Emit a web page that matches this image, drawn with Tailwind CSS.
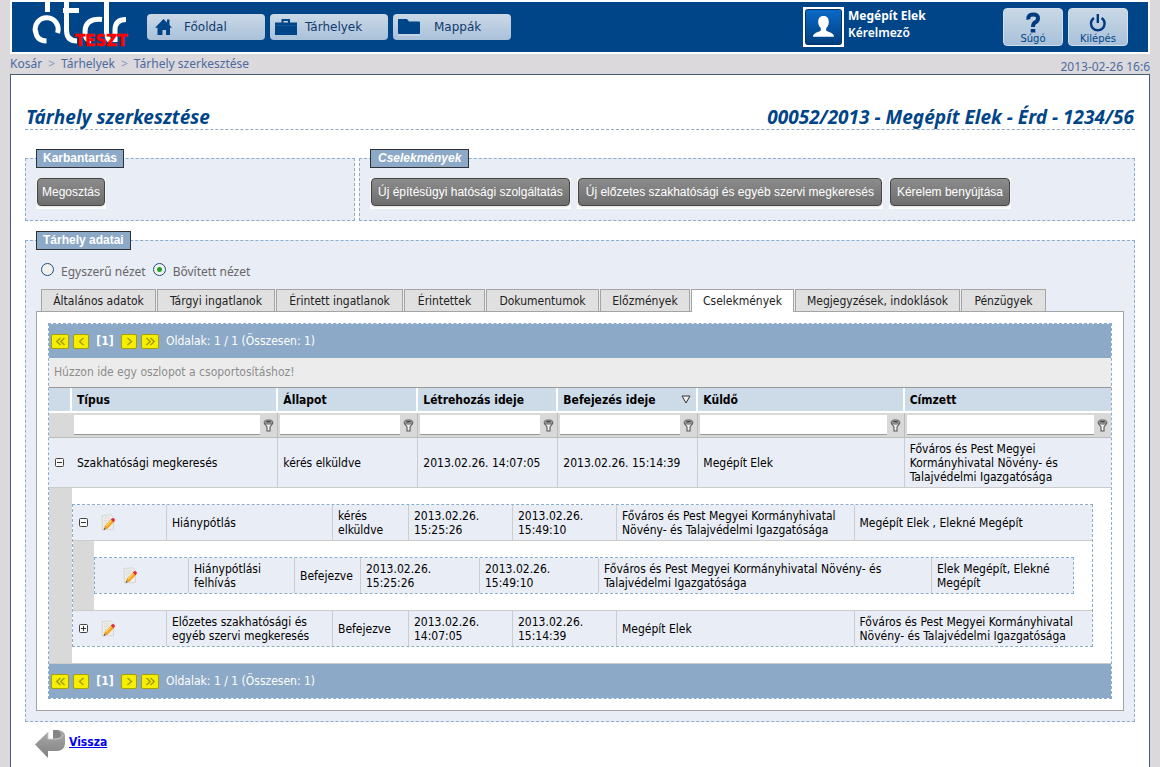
<!DOCTYPE html>
<html lang="hu">
<head>
<meta charset="utf-8">
<title>Tárhely szerkesztése</title>
<script src="https://cdn.jsdelivr.net/npm/@tailwindcss/browser@4"></script>
</head>
<body class="flex min-h-screen flex-col bg-[#dbd9dc] px-2.5 font-['DejaVu_Sans_Condensed','DejaVu_Sans',sans-serif] text-xs leading-[14px] text-black">

<svg class="hidden" aria-hidden="true">
  <symbol id="funnel" viewBox="0 0 10 12"><path d="M1 3.200C1 5 3.200 6 3.600 7.200V11h2.800V7.200C6.800 6 9 5 9 3.200" fill="#f4f4f4" stroke="#555" stroke-width="1"/><ellipse cx="5" cy="2.800" rx="4" ry="2" fill="#999" stroke="#666" stroke-width=".8"/><path d="M3 2.500h4" stroke="#333"/></symbol>
  <symbol id="edit" viewBox="0 0 14 17"><path d="M1 1.500 10 .8l2.500 2.700V15.500L1.500 16z" fill="#ececea" stroke="#d0d0ce" stroke-width=".8"/><path d="M3 4h6M3 6.500h5M3 9h3" stroke="#dcdcdc"/><path d="M3 15.500 4 11.500l6-6.300 3 2.800-6.500 6.600z" fill="#f5a41c"/><path d="M5 12 10.600 6.200" stroke="#ffd870" stroke-width="1.200"/><path d="m9.700 5.500 1.200-1.100q1.200-.8 2.300.2t.4 2.300L12.500 8.300z" fill="#dd2c38"/><path d="M3 15.500 4 11.700 6.500 14.500z" fill="#dc9a3c"/><path d="m2.600 16 .6-2 1.300 1.300z" fill="#444"/></symbol>
  <symbol id="minus" viewBox="0 0 10 10"><rect x=".5" y=".5" width="8" height="8" rx="1" fill="#f7f7f7" stroke="#444"/><path d="M2 4.500h5" stroke="#333"/></symbol>
  <symbol id="plus" viewBox="0 0 10 10"><rect x=".5" y=".5" width="8" height="8" rx="1" fill="#f7f7f7" stroke="#444"/><path d="M2 4.500h5M4.500 2v5" stroke="#333"/></symbol>
  <symbol id="one" viewBox="0 0 9 9"><path d="M6.500 1 2.500 4.500l4 3.500" fill="none" stroke="#a39b00" stroke-width="1.400"/></symbol>
  <symbol id="two" viewBox="0 0 9 9"><path d="M4.500 1 .8 4.500l3.700 3.500M8.500 1 4.800 4.500l3.700 3.500" fill="none" stroke="#a39b00" stroke-width="1.400"/></symbol>
</svg>

<header class="flex h-[54px] shrink-0 border-2 border-white bg-[#004587] pr-5 pl-5">
  <div class="w-[115px] shrink-0">
    <svg class="block" width="100" height="50" viewBox="32 2 100 50" role="img" aria-label="étdr TESZT">
      <g fill="none" stroke="#fff" stroke-width="5">
        <path d="M47.500 2V12"/>
        <path d="M35.500 32A11.500 11.500 0 1 1 57.500 33M35.500 30Q36 41 46.500 41"/>
        <path d="M66.500 2V30Q66.500 41 77 41M63 10.500H79"/>
        <path d="M102 19.500Q85 18 85 32 85 40 91 41M106.500 2V32Q107 40 111 41"/>
        <path d="M126 19.500Q115 19.500 115 30V42"/>
      </g>
      <text x="75" y="46" font-family="DejaVu Sans" font-weight="bold" font-size="15" fill="#f00" stroke="#f00" stroke-width=".6">TESZT</text>
    </svg>
  </div>
  <nav class="flex gap-[5px] pt-3 font-['DejaVu_Sans',sans-serif] text-xs text-[#123a6d]">
    <button class="flex h-[26px] w-[118px] items-center rounded bg-linear-to-b from-[#cbd9e6] to-[#a9c1da] pl-2"><svg class="mr-3" width="17" height="18" viewBox="0 0 17 18"><path d="M8.500 1 12 4.500V1.500h2.500V7L17 9.700h-2V17h-4v-5H7.500v5H2.500V9.700H0z" fill="#004587"/></svg>Főoldal</button>
    <button class="flex h-[26px] w-[118px] items-center rounded bg-linear-to-b from-[#cbd9e6] to-[#a9c1da] pl-[5px]"><svg class="mr-2" width="22" height="18" viewBox="0 0 22 18"><path d="M0 4.500h6.500V1H15v3.500h7V17H0zM8.500 3v1.500H13V3z" fill="#004587" fill-rule="evenodd"/><path d="M0 7.500h22" stroke="#1b5c9c" stroke-width=".8"/></svg>Tárhelyek</button>
    <button class="flex h-[26px] w-[118px] items-center rounded bg-linear-to-b from-[#cbd9e6] to-[#a9c1da] pl-[5px]"><svg class="mr-3.5" width="22" height="18" viewBox="0 0 22 18"><path d="M0 1.500Q0 1 .8 1H9l2 2.500h10q1 0 1 1V15q0 1-1 1H1q-1 0-1-1z" fill="#004587"/><path d="M.5 17h21" stroke="#dbe7f2"/></svg>Mappák</button>
  </nav>
  <div class="ml-auto flex gap-1 pt-[5px] font-['Noto_Sans',sans-serif] text-white">
    <svg width="41" height="40" viewBox="0 0 41 40" role="img" aria-label="Profil"><defs><linearGradient id="av" x2="0" y2="1"><stop stop-color="#0a6ac8"/><stop offset="1" stop-color="#003e7d"/></linearGradient></defs><path d="M0 0h41v40H0z" fill="#fff"/><rect x="2.500" y="2.500" width="36" height="35" rx="2" fill="url(#av)" stroke="#003468"/><path d="M20.500 9c4 0 5.300 2.600 5.300 6 0 2.800-1.200 4.800-2.600 6v2.500c1 1.500 7.800 2 7.800 6.300H10c0-4.300 6.800-4.800 7.800-6.300V21c-1.400-1.200-2.600-3.200-2.600-6 0-3.400 1.300-6 5.300-6z" fill="#fff"/></svg>
    <div class="w-[151px] leading-[17px]"><div class="font-bold">Megépít Elek</div><div class="font-semibold">Kérelmező</div></div>
    <div class="flex gap-[5px] pt-px font-['DejaVu_Sans',sans-serif] text-[10px] text-[#004587]">
      <button class="flex h-[38px] w-[60px] flex-col items-center rounded-sm border border-[#d3dfeb] bg-linear-to-b from-[#c9d8e5] to-[#a9c1da] pt-[3px] leading-3"><svg width="16" height="21" viewBox="0 0 16 21"><path d="M3.500 7.500Q2.500 2.500 8 2.500t5 4q0 2.500-3 4-2 1.200-2 4.500" fill="none" stroke="#003a80" stroke-width="4"/><path d="M5.700 17h4.600v3.500H5.700z" fill="#003a80"/></svg>Súgó</button>
      <button class="flex h-[38px] w-[60px] flex-col items-center rounded-sm border border-[#d3dfeb] bg-linear-to-b from-[#c9d8e5] to-[#a9c1da] pt-[3px] leading-3"><svg width="18" height="21" viewBox="0 0 18 21"><path d="M5 6Q2 8 2 11.500a6.800 6.800 0 0 0 13.600 0Q15.600 8 12.600 6M8.800 2v9" fill="none" stroke="#003a80" stroke-width="2.400"/></svg>Kilépés</button>
    </div>
  </div>
</header>

<div class="flex h-5 shrink-0 justify-between font-['Noto_Sans',sans-serif] text-xs leading-5 text-[#4d6a9f]">
  <nav class="flex gap-1.5"><a href="#">Kosár</a><span class="text-[#8497bd]">&gt;</span><a href="#">Tárhelyek</a><span class="text-[#8497bd]">&gt;</span><a href="#">Tárhely szerkesztése</a></nav>
  <time class="pt-[3px]">2013-02-26 16:6</time>
</div>

<main class="flex-1 border-x border-t border-[#435d78] bg-white px-3.5 pt-[31px]">
  <div class="flex justify-between border-b border-dashed border-[#8caac8] px-px font-['Noto_Sans',sans-serif] text-[19px] leading-[23px] font-bold text-[#004587] italic">
    <h1>Tárhely szerkesztése</h1>
    <h2>00052/2013 - Megépít Elek - Érd - 1234/56</h2>
  </div>

  <div class="mt-[19px] flex gap-1 font-['Liberation_Sans',sans-serif]">
    <fieldset class="h-[72px] w-[330px] border border-dashed border-[#8caccc] bg-[#e9edf5] px-2.5">
      <legend class="h-[19px] border border-[#2d3035] bg-[#8ca9c7] px-1.5 leading-[17px] font-bold text-white">Karbantartás</legend>
      <div class="flex pt-2.5">
        <span class="bg-white px-px pb-[3px]"><button class="block h-7 rounded-sm border border-[#444] bg-linear-to-b from-[#8c8c8c] to-[#6e6e6e] px-1 whitespace-nowrap text-white shadow-sm">Megosztás</button></span>
      </div>
    </fieldset>
    <fieldset class="h-[72px] min-w-0 flex-1 border border-dashed border-[#8caccc] bg-[#e9edf5] px-2.5">
      <legend class="h-[19px] border border-[#2d3035] bg-[#8ca9c7] px-[7px] leading-[17px] font-bold text-white italic">Cselekmények</legend>
      <div class="flex gap-1.5 pt-2.5">
        <span class="bg-white px-px pb-[3px]"><button class="block h-7 rounded-sm border border-[#444] bg-linear-to-b from-[#8c8c8c] to-[#6e6e6e] px-1.5 whitespace-nowrap text-white shadow-sm">Új építésügyi hatósági szolgáltatás</button></span>
        <span class="bg-white px-px pb-[3px]"><button class="block h-7 rounded-sm border border-[#444] bg-linear-to-b from-[#8c8c8c] to-[#6e6e6e] px-[7px] whitespace-nowrap text-white shadow-sm">Új előzetes szakhatósági és egyéb szervi megkeresés</button></span>
        <span class="bg-white px-px pb-[3px]"><button class="block h-7 rounded-sm border border-[#444] bg-linear-to-b from-[#8c8c8c] to-[#6e6e6e] px-1.5 whitespace-nowrap text-white shadow-sm">Kérelem benyújtása</button></span>
      </div>
    </fieldset>
  </div>

  <fieldset class="mt-2.5 min-w-0 border border-dashed border-[#8caccc] bg-[#e9edf5] px-2.5 pb-2.5">
    <legend class="h-[19px] border border-[#2d3035] bg-[#8ca9c7] px-1.5 font-['Liberation_Sans',sans-serif] leading-[17px] font-bold text-white">Tárhely adatai</legend>
    <div class="flex h-[39px] items-start gap-[7px] px-[5px] pt-[13px] font-['Noto_Sans',sans-serif] leading-[17px] text-[#666]">
      <label class="flex gap-[7px]"><input type="radio" name="view" class="size-[13px] appearance-none rounded-full border border-[#1c5180] bg-[#f1f1ee]">Egyszerű nézet</label>
      <label class="flex gap-[7px]"><input type="radio" name="view" checked class="size-[13px] appearance-none rounded-full border border-[#1c5180] bg-[#f1f1ee] bg-[radial-gradient(circle,#22a322_0_2px,#f1f1ee_3px)]">Bővített nézet</label>
    </div>
    <div class="relative z-10 -mb-px flex gap-px pl-[5px] text-[#222]" role="tablist">
      <button role="tab" class="h-[23px] w-[115px] border border-[#a4a4a4] bg-[#e0e0e0] whitespace-nowrap">Általános adatok</button>
      <button role="tab" class="h-[23px] w-[118px] border border-[#a4a4a4] bg-[#e0e0e0] whitespace-nowrap">Tárgyi ingatlanok</button>
      <button role="tab" class="h-[23px] w-[127px] border border-[#a4a4a4] bg-[#e0e0e0] whitespace-nowrap">Érintett ingatlanok</button>
      <button role="tab" class="h-[23px] w-[81px] border border-[#a4a4a4] bg-[#e0e0e0] whitespace-nowrap">Érintettek</button>
      <button role="tab" class="h-[23px] w-[113px] border border-[#a4a4a4] bg-[#e0e0e0] whitespace-nowrap">Dokumentumok</button>
      <button role="tab" class="h-[23px] w-[90px] border border-[#a4a4a4] bg-[#e0e0e0] whitespace-nowrap">Előzmények</button>
      <button role="tab" aria-selected="true" class="h-[23px] w-[103px] border border-b-0 border-[#a4a4a4] bg-white whitespace-nowrap">Cselekmények</button>
      <button role="tab" class="h-[23px] w-[165px] border border-[#a4a4a4] bg-[#e0e0e0] whitespace-nowrap">Megjegyzések, indoklások</button>
      <button role="tab" class="h-[23px] w-[85px] border border-[#a4a4a4] bg-[#e0e0e0] whitespace-nowrap">Pénzügyek</button>
    </div>

    <div class="border border-[#a4a4a4] bg-white p-[11px]">
      <div class="border border-dashed border-[#8caccc]">
        <div class="flex h-[34px] items-center bg-[#8ca9c7] pl-0.5 text-white">
          <button aria-label="Első oldal" class="mr-1 flex h-[15px] w-[18px] items-center justify-center rounded-xs border border-[#a8a000] bg-[#f5ee00]"><svg width="9" height="9"><use href="#two"/></svg></button>
          <button aria-label="Előző oldal" class="flex h-[15px] w-4 items-center justify-center rounded-xs border border-[#a8a000] bg-[#f5ee00]"><svg width="9" height="9"><use href="#one"/></svg></button>
          <b class="w-8 text-center">[1]</b>
          <button aria-label="Következő oldal" class="mr-1 flex h-[15px] w-4 items-center justify-center rounded-xs border border-[#a8a000] bg-[#f5ee00]"><svg class="rotate-180" width="9" height="9"><use href="#one"/></svg></button>
          <button aria-label="Utolsó oldal" class="mr-[7px] flex h-[15px] w-[18px] items-center justify-center rounded-xs border border-[#a8a000] bg-[#f5ee00]"><svg class="rotate-180" width="9" height="9"><use href="#two"/></svg></button>
          Oldalak: 1 / 1 (Összesen: 1)
        </div>
        <div class="h-[30px] border-b border-[#999] bg-[#ececec] pl-[5px] leading-[29px] text-[#8c8c8c]">Húzzon ide egy oszlopot a csoportosításhoz!</div>

        <table class="w-full table-fixed border-separate border-spacing-0">
          <colgroup><col class="w-[23px]"><col><col class="w-[140px]"><col class="w-[140px]"><col class="w-[140px]"><col><col></colgroup>
          <thead>
            <tr class="h-[25px] bg-[#cddae7] text-left">
              <th class="border-r-2 border-b-2 border-white p-0"></th>
              <th class="border-r-2 border-b-2 border-white p-0 pl-[5px]">Típus</th>
              <th class="border-r-2 border-b-2 border-white p-0 pl-[5px]">Állapot</th>
              <th class="border-r-2 border-b-2 border-white p-0 pl-[5px]">Létrehozás ideje</th>
              <th class="border-r-2 border-b-2 border-white p-0 px-[5px]"><span class="flex items-center justify-between">Befejezés ideje<svg width="10" height="9" viewBox="0 0 10 9"><path d="M1 1h8L5 8z" fill="#eee" stroke="#333"/></svg></span></th>
              <th class="border-r-2 border-b-2 border-white p-0 pl-[5px]">Küldő</th>
              <th class="border-b-2 border-white p-0 pl-[5px]">Címzett</th>
            </tr>
            <tr class="h-[25px] bg-[#d9d9d9] text-left">
              <td class="border-b border-[#bcbcbc] p-0"></td>
              <td class="border-r border-b border-[#bcbcbc] p-0 pl-0.5"><span class="flex items-center"><input aria-label="Típus szűrő" class="h-5 min-w-0 flex-1 border-b border-[#999] bg-white px-1"><svg class="mx-[3px]" width="11" height="13"><use href="#funnel"/></svg></span></td>
              <td class="border-r border-b border-[#bcbcbc] p-0 pl-0.5"><span class="flex items-center"><input aria-label="Állapot szűrő" class="h-5 min-w-0 flex-1 border-b border-[#999] bg-white px-1"><svg class="mx-[3px]" width="11" height="13"><use href="#funnel"/></svg></span></td>
              <td class="border-r border-b border-[#bcbcbc] p-0 pl-0.5"><span class="flex items-center"><input aria-label="Létrehozás ideje szűrő" class="h-5 min-w-0 flex-1 border-b border-[#999] bg-white px-1"><svg class="mx-[3px]" width="11" height="13"><use href="#funnel"/></svg></span></td>
              <td class="border-r border-b border-[#bcbcbc] p-0 pl-0.5"><span class="flex items-center"><input aria-label="Befejezés ideje szűrő" class="h-5 min-w-0 flex-1 border-b border-[#999] bg-white px-1"><svg class="mx-[3px]" width="11" height="13"><use href="#funnel"/></svg></span></td>
              <td class="border-r border-b border-[#bcbcbc] p-0 pl-0.5"><span class="flex items-center"><input aria-label="Küldő szűrő" class="h-5 min-w-0 flex-1 border-b border-[#999] bg-white px-1"><svg class="mx-[3px]" width="11" height="13"><use href="#funnel"/></svg></span></td>
              <td class="border-b border-[#bcbcbc] p-0 pl-0.5"><span class="flex items-center"><input aria-label="Címzett szűrő" class="h-5 min-w-0 flex-1 border-b border-[#999] bg-white px-1"><svg class="mx-[3px]" width="11" height="13"><use href="#funnel"/></svg></span></td>
            </tr>
          </thead>
          <tbody>
            <tr class="h-[50px] bg-[#e9edf5]">
              <td class="border-b border-[#ccc] p-0"><button aria-label="Összecsuk" class="ml-1.5 block"><svg width="10" height="10"><use href="#minus"/></svg></button></td>
              <td class="border-r border-b border-[#ccc] p-0 pl-[5px]">Szakhatósági megkeresés</td>
              <td class="border-r border-b border-[#ccc] p-0 pl-[5px]">kérés elküldve</td>
              <td class="border-r border-b border-[#ccc] p-0 pl-[5px]">2013.02.26. 14:07:05</td>
              <td class="border-r border-b border-[#ccc] p-0 pl-[5px]">2013.02.26. 15:14:39</td>
              <td class="border-r border-b border-[#ccc] p-0 pl-[5px]">Megépít Elek</td>
              <td class="border-b border-[#ccc] p-0 pr-10 pl-[5px]">Főváros és Pest Megyei Kormányhivatal Növény- és Talajvédelmi Igazgatósága</td>
            </tr>
            <tr>
              <td class="border-b border-[#ccc] bg-[#d9d9d9] p-0"></td>
              <td colspan="6" class="border-b border-[#ccc] p-0 py-4 pr-[18px]">
                <div class="border border-dashed border-[#8caccc]">
                  <table class="w-full table-fixed border-separate border-spacing-0">
                    <colgroup><col class="w-[21px]"><col class="w-[73px]"><col class="w-[166px]"><col class="w-[76px]"><col class="w-[104px]"><col class="w-[104px]"><col><col></colgroup>
                    <tbody>
                      <tr class="h-9 bg-[#e9edf5]">
                        <td class="border-b border-[#ccc] p-0"><button aria-label="Összecsuk" class="ml-1.5 block"><svg width="10" height="10"><use href="#minus"/></svg></button></td>
                        <td class="border-r border-b border-[#ccc] p-0"><button aria-label="Szerkesztés" class="ml-[7px] block"><svg width="14" height="17"><use href="#edit"/></svg></button></td>
                        <td class="border-r border-b border-[#ccc] p-0 pl-[5px]">Hiánypótlás</td>
                        <td class="border-r border-b border-[#ccc] p-0 pl-[5px]">kérés elküldve</td>
                        <td class="border-r border-b border-[#ccc] p-0 pl-[5px]">2013.02.26.<br>15:25:26</td>
                        <td class="border-r border-b border-[#ccc] p-0 pl-[5px]">2013.02.26.<br>15:49:10</td>
                        <td class="border-r border-b border-[#ccc] p-0 pl-[5px]">Főváros és Pest Megyei Kormányhivatal Növény- és Talajvédelmi Igazgatósága</td>
                        <td class="border-b border-[#ccc] p-0 pl-[5px]">Megépít Elek , Elekné Megépít</td>
                      </tr>
                      <tr>
                        <td class="border-b border-[#ccc] bg-[#d9d9d9] p-0"></td>
                        <td colspan="7" class="border-b border-[#ccc] p-0 py-4 pr-[18px]">
                          <div class="border border-dashed border-[#8caccc]">
                            <table class="w-full table-fixed border-separate border-spacing-0">
                              <colgroup><col class="w-[94px]"><col class="w-[106px]"><col class="w-[66px]"><col class="w-[119px]"><col class="w-[119px]"><col><col class="w-[141px]"></colgroup>
                              <tbody>
                                <tr class="h-[35px] bg-[#e9edf5]">
                                  <td class="border-r border-[#ccc] p-0"><button aria-label="Szerkesztés" class="ml-7 block"><svg width="14" height="17"><use href="#edit"/></svg></button></td>
                                  <td class="border-r border-[#ccc] p-0 pl-[5px]">Hiánypótlási<br>felhívás</td>
                                  <td class="border-r border-[#ccc] p-0 pl-[5px]">Befejezve</td>
                                  <td class="border-r border-[#ccc] p-0 pl-[5px]">2013.02.26.<br>15:25:26</td>
                                  <td class="border-r border-[#ccc] p-0 pl-[5px]">2013.02.26.<br>15:49:10</td>
                                  <td class="border-r border-[#ccc] p-0 pl-[5px]">Főváros és Pest Megyei Kormányhivatal Növény- és Talajvédelmi Igazgatósága</td>
                                  <td class="p-0 pl-[5px]">Elek Megépít, Elekné Megépít</td>
                                </tr>
                              </tbody>
                            </table>
                          </div>
                        </td>
                      </tr>
                      <tr class="h-[35px] bg-[#e9edf5]">
                        <td class="p-0"><button aria-label="Kibont" class="ml-1.5 block"><svg width="10" height="10"><use href="#plus"/></svg></button></td>
                        <td class="border-r border-[#ccc] p-0"><button aria-label="Szerkesztés" class="ml-[7px] block"><svg width="14" height="17"><use href="#edit"/></svg></button></td>
                        <td class="border-r border-[#ccc] p-0 pl-[5px]">Előzetes szakhatósági és egyéb szervi megkeresés</td>
                        <td class="border-r border-[#ccc] p-0 pl-[5px]">Befejezve</td>
                        <td class="border-r border-[#ccc] p-0 pl-[5px]">2013.02.26.<br>14:07:05</td>
                        <td class="border-r border-[#ccc] p-0 pl-[5px]">2013.02.26.<br>15:14:39</td>
                        <td class="border-r border-[#ccc] p-0 pl-[5px]">Megépít Elek</td>
                        <td class="p-0 pl-[5px]">Főváros és Pest Megyei Kormányhivatal Növény- és Talajvédelmi Igazgatósága</td>
                      </tr>
                    </tbody>
                  </table>
                </div>
              </td>
            </tr>
          </tbody>
        </table>

        <div class="flex h-[34px] items-center bg-[#8ca9c7] pl-0.5 text-white">
          <button aria-label="Első oldal" class="mr-1 flex h-[15px] w-[18px] items-center justify-center rounded-xs border border-[#a8a000] bg-[#f5ee00]"><svg width="9" height="9"><use href="#two"/></svg></button>
          <button aria-label="Előző oldal" class="flex h-[15px] w-4 items-center justify-center rounded-xs border border-[#a8a000] bg-[#f5ee00]"><svg width="9" height="9"><use href="#one"/></svg></button>
          <b class="w-8 text-center">[1]</b>
          <button aria-label="Következő oldal" class="mr-1 flex h-[15px] w-4 items-center justify-center rounded-xs border border-[#a8a000] bg-[#f5ee00]"><svg class="rotate-180" width="9" height="9"><use href="#one"/></svg></button>
          <button aria-label="Utolsó oldal" class="mr-[7px] flex h-[15px] w-[18px] items-center justify-center rounded-xs border border-[#a8a000] bg-[#f5ee00]"><svg class="rotate-180" width="9" height="9"><use href="#two"/></svg></button>
          Oldalak: 1 / 1 (Összesen: 1)
        </div>
      </div>
    </div>
  </fieldset>

  <a href="#" class="mt-[7px] ml-2.5 inline-flex items-center gap-1 font-bold text-[#0000f0]">
    <svg width="30" height="30" viewBox="0 0 30 30"><defs><linearGradient id="back" x2="0" y2="1"><stop stop-color="#aaa"/><stop offset="1" stop-color="#808080"/></linearGradient></defs><path d="M18 1h5q7 1 7 6v8q-1 7-8 7h-9v7L0 15.500 13 3v7h5z" fill="url(#back)"/><path d="M18 1v9h4q4-1 4-4t-3-5z" fill="#858585"/><path d="M13 3v7h9q5-.5 6-4" fill="none" stroke="#ccc"/></svg>
    <span class="pb-1 underline">Vissza</span>
  </a>
</main>
</body>
</html>
